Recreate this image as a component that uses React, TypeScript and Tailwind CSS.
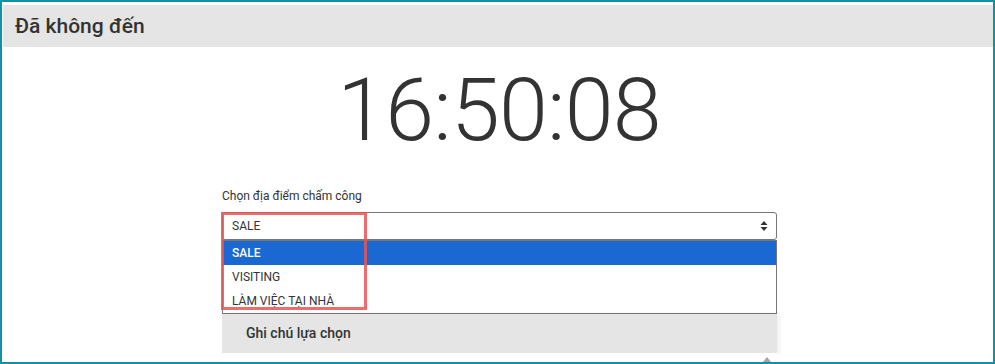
import { useState } from "react";

const options = ["SALE", "VISITING", "LÀM VIỆC TẠI NHÀ"];

export default function App() {
  const [selected] = useState("SALE");

  return (
    <div className="w-[995px] h-[364px] overflow-hidden bg-white border-2 border-[#0e93a6] font-['Roboto',sans-serif] text-[#333]">
      <div className="pt-[3px] pl-px">
        {/* header */}
        <div className="h-[42px] bg-[#e5e5e5] flex items-center pl-[12px]">
          <h1 className="text-[21px] font-medium leading-none">Đã không đến</h1>
        </div>

        {/* clock */}
        <div className="flex justify-center pt-[19px] pl-[2px]">
          <span className="text-[88px] font-light leading-none tracking-[-0.8px]">16:50:08</span>
        </div>

        <div className="ml-[219px] w-[555px] mt-[35px]">
          <label className="block text-[12px] leading-[14px] mb-[9px]">Chọn địa điểm chấm công</label>

          <div className="relative">
            {/* select */}
            <div className="h-[28px] border border-[#767676] rounded-[3px] flex items-center justify-between pl-[9px] pr-[8px] text-[12px]">
              <span>{selected}</span>
              <svg width="8" height="12" viewBox="0 0 8 12" className="text-[#333]">
                <path d="M4 1 L7.5 5 H0.5 Z" fill="currentColor" />
                <path d="M4 11 L7.5 7 H0.5 Z" fill="currentColor" />
              </svg>
            </div>

            {/* open list */}
            <div className="border border-[#767676] text-[12px]">
              {options.map((o) => (
                <div
                  key={o}
                  className={
                    o === selected
                      ? "h-[24px] flex items-center pl-[9px] bg-[#1a69d2] text-white font-medium"
                      : "h-[24px] flex items-center pl-[9px] bg-white"
                  }
                >
                  {o}
                </div>
              ))}
            </div>

            {/* note block */}
            <div className="h-[39px] bg-[#e5e5e5] flex items-center pl-[24px] shadow-[3px_0_4px_rgba(0,0,0,0.06)]">
              <span className="text-[14px] font-medium">Ghi chú lựa chọn</span>
            </div>
            <div className="h-[20px] bg-white flex justify-end pr-[6px] pt-[4px]">
              <svg width="8" height="5" viewBox="0 0 8 5">
                <path d="M4 0 L8 5 H0 Z" fill="#a3a3a3" />
              </svg>
            </div>

            {/* annotation */}
            <div className="absolute left-[-1px] top-0 w-[146px] h-[98px] border-[3px] border-[#e85555]/85 pointer-events-none" />
          </div>
        </div>
      </div>
    </div>
  );
}
